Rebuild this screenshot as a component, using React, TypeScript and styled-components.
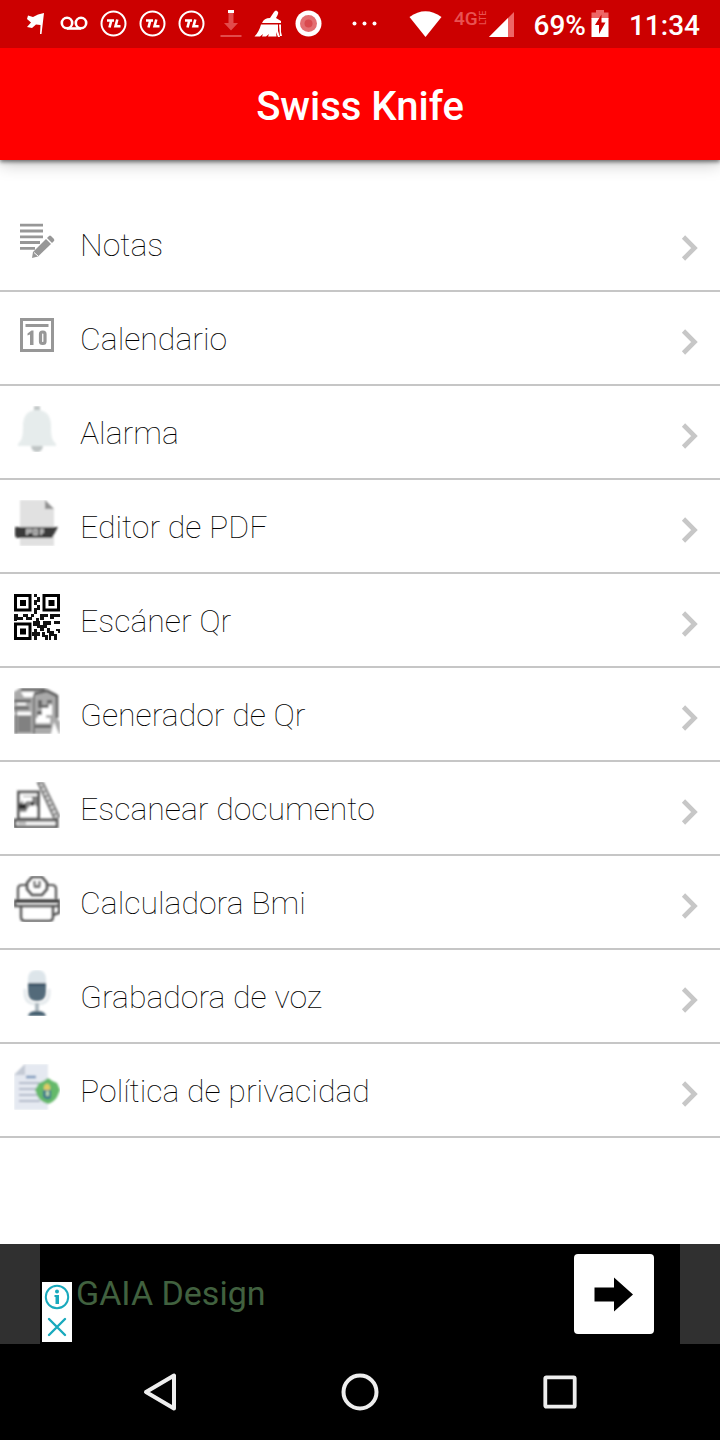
import React from "react";
import styled, { createGlobalStyle } from "styled-components";

const GlobalStyle = createGlobalStyle`
  * { box-sizing: border-box; }
  html, body { margin: 0; padding: 0; background: #ffffff; }
  body { font-family: Roboto, "Liberation Sans", sans-serif; }
  button { border: 0; padding: 0; margin: 0; background: none; cursor: pointer; }
  svg { display: block; flex: none; }
`;

const Screen = styled.div`
  min-height: 100vh;
  display: flex;
  flex-direction: column;
`;

const StatusBar = styled.div`
  position: relative;
  z-index: 1;
  height: 48px;
  background: #cc0000;
  color: #ffffff;
  display: flex;
  align-items: center;
  justify-content: space-between;
  padding: 0 20px 0 16px;
`;

const StatusGroup = styled.div<{ $gap?: number }>`
  display: flex;
  align-items: center;
  gap: ${(p) => p.$gap ?? 0}px;
`;

const StatusText = styled.span`
  font-size: 28px;
  line-height: 32px;
  font-weight: 500;
  padding-top: 4px;
`;

const AppBar = styled.header`
  height: 112px;
  background: #ff0000;
  display: flex;
  align-items: center;
  justify-content: center;
  padding-top: 6px;
  box-shadow: 0 2px 4px rgba(0, 0, 0, 0.5), 0 4px 16px rgba(0, 0, 0, 0.22);
`;

const Title = styled.h1`
  margin: 0;
  color: #ffffff;
  font-size: 40px;
  line-height: 48px;
  font-weight: 500;
`;

const Main = styled.main`
  flex: 1;
  padding: 38px 0 40px;
`;

const Menu = styled.ul`
  list-style: none;
  margin: 0;
  padding: 0;
`;

const MenuItem = styled.li`
  border-bottom: 2px solid #c6c6c6;
`;

const MenuLink = styled.a`
  display: flex;
  align-items: center;
  height: 92px;
  padding: 4px 20px 0 14px;
  color: #000000;
  text-decoration: none;
`;

const IconBox = styled.span`
  flex: none;
  width: 66px;
  height: 56px;
`;

const Label = styled.span`
  flex: 1;
  font-size: 32px;
  line-height: 40px;
  font-weight: 100;
  padding-bottom: 2px;
`;

const ChevronBox = styled.span`
  padding-top: 4px;
`;

const AdBanner = styled.aside`
  height: 100px;
  background: #303030;
  padding: 0 40px;
`;

const AdBody = styled.div`
  position: relative;
  height: 100%;
  background: #000000;
  display: flex;
  align-items: center;
  justify-content: space-between;
  padding: 0 26px 0 36px;
`;

const AdLink = styled.a`
  color: #41613f;
  font-size: 34px;
  line-height: 40px;
  text-decoration: none;
  padding-bottom: 2px;
`;

const AdButton = styled.button`
  width: 80px;
  height: 80px;
  border-radius: 4px;
  background: #ffffff;
  display: flex;
  align-items: center;
  justify-content: center;
`;

const AdChoices = styled.div`
  position: absolute;
  left: 2px;
  bottom: 2px;
  display: flex;
  flex-direction: column;
  background: #ffffff;
`;

const AdChoice = styled.button`
  width: 30px;
  height: 30px;
`;

const NavBar = styled.nav`
  height: 96px;
  background: #000000;
  display: flex;
  justify-content: center;
`;

const NavButton = styled.button`
  width: 200px;
  display: flex;
  align-items: center;
  justify-content: center;
`;

/* ---------- status bar icons ---------- */

const StatusIcon = ({ children }: { children: React.ReactNode }) => (
  <svg width="39" height="48" viewBox="0 0 39 48" aria-hidden="true">{children}</svg>
);

const FlagIcon = () => (
  <StatusIcon>
    <path d="M12 15.500 L17 17 L22 14.500 L28 13 L25.500 34 H24 L24.500 25 L20 24.500 L16 28 L11 27 L15 22.500 L11 19Z" fill="#fff" />
  </StatusIcon>
);

const VoicemailIcon = () => (
  <StatusIcon>
    <g fill="none" stroke="#fff" strokeWidth="2.600">
      <circle cx="12" cy="23" r="5.200" />
      <circle cx="26" cy="23" r="5.200" />
      <path d="M12 28.500 H26" />
    </g>
  </StatusIcon>
);

const TlIcon = () => (
  <StatusIcon>
    <circle cx="19.500" cy="23.500" r="12" fill="none" stroke="#fff" strokeWidth="2" />
    <path d="M13 20.500 H20 M17.300 20.500 L15.500 27.500 M23.300 19.500 L21.500 26.300 H26.500" fill="none" stroke="#fff" strokeWidth="2.600" />
  </StatusIcon>
);

const DownloadIcon = () => (
  <StatusIcon>
    <g fill="#e24b4b">
      <path d="M17.500 13 H22.500 V23 H27 L20 30.500 L13 23 H17.500Z" />
      <rect x="9.500" y="35" width="21" height="2" />
    </g>
    <rect x="17" y="10" width="6" height="3" fill="#fff" />
  </StatusIcon>
);

const BroomIcon = () => (
  <StatusIcon>
    <g fill="#fff" transform="translate(4 0)">
      <path d="M16 18 L20 12 Q22 9 24 12 Q25 13 22 18 L27 21 V23 H8 Q10 18 16 18Z" />
      <path d="M7 24.500 H24 L24 31 L26 37 H24 L22 32 L22.500 36.500 H14 L15 34 L12 36.500 H8 L9 34 L6 36.500 H0.500 Q5 32 7 24.500Z" />
      <path d="M25 24.500 H27 V32 L28 36 H26Z" />
    </g>
  </StatusIcon>
);

const RecordIcon = () => (
  <StatusIcon>
    <circle cx="19.500" cy="23.500" r="13" fill="#fff" />
    <circle cx="19.500" cy="23.500" r="8.500" fill="#e36f72" />
    <circle cx="19.500" cy="23.500" r="4" fill="#d94a4e" />
  </StatusIcon>
);

const MoreIcon = () => (
  <svg width="74" height="48" viewBox="0 0 74 48" aria-hidden="true">
    <g fill="#fff">
      <circle cx="26.500" cy="23.500" r="2" />
      <circle cx="36.500" cy="23.500" r="2" />
      <circle cx="46.500" cy="23.500" r="2" />
    </g>
  </svg>
);

const WifiIcon = () => (
  <svg width="33" height="48" viewBox="0 0 33 48" aria-hidden="true">
    <path d="M0.500 17 Q16.500 5.500 32.500 17 L16.500 37Z" fill="#fff" />
  </svg>
);

const SignalIcon = () => (
  <svg width="60" height="48" viewBox="0 0 60 48" aria-hidden="true">
    <text x="0" y="25" fill="#e85252" fontSize="19" fontWeight="500" fontFamily="Roboto, sans-serif">4G</text>
    <text transform="translate(32 25) rotate(-90)" fill="#e85252" fontSize="9" fontWeight="500" fontFamily="Roboto, sans-serif">LTE</text>
    <path d="M60 12 V37 H35Z" fill="#e66" />
    <path d="M54 18 V37 H35Z" fill="#fff" />
  </svg>
);

const BatteryIcon = () => (
  <svg width="18" height="48" viewBox="0 0 18 48" aria-hidden="true">
    <path d="M5 10 H13 V12.500 H17.500 V19 H0.500 V12.500 H5Z" fill="#e66" />
    <rect x="0.500" y="18" width="17" height="19" fill="#fff" />
    <path d="M10.500 14.500 L4 25 H8 V34 L14.500 22.500 H10.500Z" fill="#cc0000" />
  </svg>
);

/* ---------- menu icons ---------- */

const MenuIcon = ({ soft, children }: { soft?: boolean; children: React.ReactNode }) => (
  <svg width="46" height="46" viewBox="0 0 46 46" aria-hidden="true">
    <defs>
      <filter id="soften" x="0" y="0" width="46" height="46" filterUnits="userSpaceOnUse">
        <feGaussianBlur stdDeviation="0.9" />
      </filter>
    </defs>
    <g filter={soft ? "url(#soften)" : undefined}>{children}</g>
  </svg>
);

const NotesIcon = () => (
  <MenuIcon>
    <path d="M6 7.200 H29 M6 13 H29 M6 18.800 H29 M6 24.500 H26 M6 30.300 H21" fill="none" stroke="#979797" strokeWidth="2.800" />
    <path d="M32 21 L37 26 L24 38.500 L18 40 L19 34Z" fill="#979797" />
    <path d="M33 20 L35 18 Q36 17 37 18 L39.500 20.500 Q41 22 40 23 L38 25Z" fill="#979797" />
    <path d="M20 34.500 L24 38" stroke="#fff" strokeWidth="1" />
  </MenuIcon>
);

const CalendarIcon = () => (
  <MenuIcon>
    <rect x="7.500" y="7.500" width="31" height="31" fill="none" stroke="#979797" strokeWidth="3" />
    <rect x="11.500" y="12" width="23" height="3" fill="#979797" />
    <path d="M13.500 21.500 L17.500 18.500 H19.500 V33 H16 V22.500 L13.500 23.500Z" fill="#979797" />
    <rect x="26.500" y="20" width="4.500" height="11.500" rx="2" fill="none" stroke="#979797" strokeWidth="3.200" />
  </MenuIcon>
);

const BellIcon = () => (
  <MenuIcon soft>
    <rect x="20" y="0" width="6" height="6" fill="#c2c7c7" />
    <path d="M17 40 H29 Q28 46 23 46 Q18 46 17 40Z" fill="#bfc5c5" />
    <path d="M23 4 C12 4 9 12 9 20 C9 31 8 34 4 38 V40 H42 V38 C38 34 37 31 37 20 C37 12 34 4 23 4Z" fill="#e6ecec" />
  </MenuIcon>
);

const PdfIcon = () => (
  <MenuIcon soft>
    <path d="M6 0 H31 L40 9 V46 H6Z" fill="#e1e1e1" />
    <path d="M31 0 L40 9 H31Z" fill="#909090" />
    <path d="M1 27 H44 L38 38 H3 L1 36Z" fill="#3a3a3a" />
    <path d="M13 35 V29.500 H17 V32 H13 M20 29.500 V34.500 H23 V29.500Z M27 35 V29.500 H30 M27 32 H30" fill="none" stroke="#b8b8b8" strokeWidth="2" />
  </MenuIcon>
);

const QrFinder = ({ x, y }: { x: number; y: number }) => (
  <g transform={`translate(${x} ${y})`}>
    <rect x="1.500" y="1.500" width="14.500" height="14.500" fill="none" stroke="#000" strokeWidth="3" />
    <rect x="6" y="6" width="6" height="6" fill="#000" />
  </g>
);

const QrScanIcon = () => (
  <MenuIcon>
    <QrFinder x={0} y={0} />
    <QrFinder x={28.5} y={0} />
    <QrFinder x={0} y={28.5} />
    <path
      d="M20 0h3v3h3v5h-3v3h-3v-5h3v-3h-3zM23 11h3v5h-3v4h-3v-6h3zM0 20h4v3h5v3h-9zM9 20h5v3h3v-3h3v3h-2v3h-6v-3h-3zM26 20h8v3h-4v3h-4zM36 20h10v3h-6v2h-4zM22 24h3v3h-3zM40 27h6v3h-6zM19 27h7v4h3v-4h8v4h-4v3h-3v3h-4v-3h-3v-2h-4zM20 35h3v3h3v4h-3v4h-3v-4h-2v-4h2zM28 38h3v3h3v5h-3v-3h-3zM33 34h3v3h4v3h3v6h-3v-4h-3v4h-2v-7h-2zM42 35h4v4h-2v-2h-2zM0 26h3v1h-3z"
      fill="#111"
    />
  </MenuIcon>
);

const QrGeneratorIcon = () => (
  <MenuIcon soft>
    <path d="M0 4 L6 0 H32 L43 6 V30 L46 34 V46 H0Z" fill="#aaaaaa" />
    <path d="M7 1.500 H31 M0 13 H17 M0 20 H15 M43 7 V30 M20 6 L33 3 L43 8" fill="none" stroke="#606060" strokeWidth="2.600" />
    <path d="M7 4 H20 V9 H10Z M3 15 H12 V17 H3Z M35 17 H38 V27 H32 V30 H24 V27 H28 V20 H35Z M22 30 H36 V35 H22Z M40 34 L45 46 H37Z M0 24 H17 V27 H0Z" fill="#ffffff" />
    <path d="M24 12 H28 V17 H33 V12 H38 V15 H34 V20 H24Z M23 23 H28 V27 H23Z M21 37 H37 V40 H21Z" fill="#666" />
    <rect x="4" y="28" width="13" height="16" fill="#818181" />
    <path d="M2 22 V46 M20 6 V46" stroke="#777" strokeWidth="2" />
  </MenuIcon>
);

const DocScanIcon = () => (
  <MenuIcon soft>
    <rect x="4.500" y="10" width="20" height="27" fill="#fff" stroke="#606060" strokeWidth="3" />
    <path d="M5 22 L9 18 V14 H23 V25 L19 21 L14 26 L12 30 H5Z" fill="#858585" />
    <path d="M5 22 H12 V27 H5Z M17 20 H20 V24 H17Z" fill="#2f2f2f" />
    <path d="M9 15 H18 V19 H13 L9 22Z M7 31 H22 V35 H7Z" fill="#fff" />
    <path d="M24 1 H29 L45 34 L41 38Z" fill="#efefef" stroke="#777" strokeWidth="2" />
    <path d="M27 4 L43 36" stroke="#8c8c8c" strokeWidth="3" strokeDasharray="3 2" />
    <path d="M1 38 H43 V45 H1Z" fill="#f7f7f7" stroke="#5a5a5a" strokeWidth="2.800" />
    <path d="M4 41 H12" stroke="#b5b5b5" strokeWidth="3" />
  </MenuIcon>
);

const BmiIcon = () => (
  <MenuIcon soft>
    <g fill="none" stroke="#555">
      <path d="M4 23 V13 Q4 9 8 9 H13 M33 9 H38 Q42 9 42 13 V23" strokeWidth="2.200" />
      <path d="M18 1 H28 L33 7 V13 L28 19 H18 L13 13 V7Z" strokeWidth="2.600" />
      <path d="M0 25 H46" stroke="#222" strokeWidth="3" />
      <path d="M1 24 V30 H45 V25" strokeWidth="2.400" />
      <path d="M7 31 V41 Q7 45 11 45 H35 Q39 45 39 41 V31 M39 39 L45 37 V30" strokeWidth="2.400" />
      <path d="M20.500 5 V10 H25.500 V5" strokeWidth="1.800" />
    </g>
    <rect x="20" y="9" width="6" height="3" fill="#777" />
  </MenuIcon>
);

const MicIcon = () => (
  <MenuIcon soft>
    <path d="M11 19 V23 Q11 34 23 34 Q35 34 35 23 V19" fill="none" stroke="#e5eaed" strokeWidth="3" />
    <path d="M14 14 V9 Q14 0 23 0 Q32 0 32 9 V14Z" fill="#dde5ea" />
    <path d="M14 13 H32 V22 Q32 31 23 31 Q14 31 14 22Z" fill="#536b7a" />
    <path d="M15 13 H31 V16 H15Z" fill="#3d5567" />
    <rect x="21" y="33" width="4" height="8" fill="#aeb9c0" />
    <path d="M14 46 Q15 41 23 41 Q31 41 32 46Z" fill="#455f70" />
  </MenuIcon>
);

const PolicyIcon = () => (
  <MenuIcon soft>
    <path d="M11 0 H34 V46 H0 V11Z" fill="#e5e9f1" />
    <path d="M11 0 V11 H0Z" fill="#c4cad5" />
    <path d="M12 13 H22" stroke="#7998bb" strokeWidth="2.600" />
    <path d="M5 19 H25 M5 25 H24 M5 31 H24 M5 37 H26" stroke="#b0b7c8" strokeWidth="2.200" />
    <path d="M34 14 Q39 18 43 19 L46 26 L43 33 Q40 38 34 40 Q27 38 24 33 L21 26 L25 19 Q29 18 34 14Z" fill="#65b96b" />
    <path d="M29 26 H37 V34 Q33 37 29 33Z" fill="#3f7a8c" />
    <path d="M30 26 V22 Q33 17 36 22 V26" fill="#e0cc66" />
    <rect x="32" y="27" width="3" height="5" fill="#b9d8b2" />
  </MenuIcon>
);

const Chevron = () => (
  <svg width="20" height="28" viewBox="0 0 20 28" aria-hidden="true">
    <path d="M3.500 3 L14.500 14 L3.500 25" fill="none" stroke="#c7c7c7" strokeWidth="4.600" />
  </svg>
);

const items = [
  { label: "Notas", Icon: NotesIcon },
  { label: "Calendario", Icon: CalendarIcon },
  { label: "Alarma", Icon: BellIcon },
  { label: "Editor de PDF", Icon: PdfIcon },
  { label: "Escáner Qr", Icon: QrScanIcon },
  { label: "Generador de Qr", Icon: QrGeneratorIcon },
  { label: "Escanear documento", Icon: DocScanIcon },
  { label: "Calculadora Bmi", Icon: BmiIcon },
  { label: "Grabadora de voz", Icon: MicIcon },
  { label: "Política de privacidad", Icon: PolicyIcon },
];

export default function App() {
  return (
    <>
      <GlobalStyle />
      <Screen>
        <StatusBar>
          <StatusGroup>
            <FlagIcon />
            <VoicemailIcon />
            <TlIcon />
            <TlIcon />
            <TlIcon />
            <DownloadIcon />
            <BroomIcon />
            <RecordIcon />
            <MoreIcon />
          </StatusGroup>
          <StatusGroup $gap={20}>
            <StatusGroup $gap={12}>
              <WifiIcon />
              <SignalIcon />
            </StatusGroup>
            <StatusGroup $gap={5}>
              <StatusText>69%</StatusText>
              <BatteryIcon />
            </StatusGroup>
            <StatusText>11:34</StatusText>
          </StatusGroup>
        </StatusBar>

        <AppBar>
          <Title>Swiss Knife</Title>
        </AppBar>

        <Main>
          <Menu>
            {items.map(({ label, Icon }) => (
              <MenuItem key={label}>
                <MenuLink href="#">
                  <IconBox>
                    <Icon />
                  </IconBox>
                  <Label>{label}</Label>
                  <ChevronBox>
                    <Chevron />
                  </ChevronBox>
                </MenuLink>
              </MenuItem>
            ))}
          </Menu>
        </Main>

        <AdBanner>
          <AdBody>
            <AdLink href="#">GAIA Design</AdLink>
            <AdButton aria-label="Abrir">
              <svg width="40" height="36" viewBox="0 0 40 36" aria-hidden="true">
                <path d="M0.500 11.500 H20 V1.500 L39 18.500 L20 35.500 V25.500 H0.500Z" fill="#000" />
              </svg>
            </AdButton>
            <AdChoices>
              <AdChoice aria-label="Información">
                <svg width="30" height="30" viewBox="0 0 30 30" aria-hidden="true">
                  <circle cx="15" cy="15" r="11.200" fill="none" stroke="#18a9bd" strokeWidth="2" />
                  <circle cx="15" cy="9.500" r="2" fill="#18a9bd" />
                  <path d="M12.500 13 H17 V22 H13.500 V15 H12.500Z" fill="#18a9bd" />
                </svg>
              </AdChoice>
              <AdChoice aria-label="Cerrar">
                <svg width="30" height="30" viewBox="0 0 30 30" aria-hidden="true">
                  <path d="M7 7 L23 23 M23 7 L7 23" stroke="#18a9bd" strokeWidth="2.400" strokeLinecap="round" />
                </svg>
              </AdChoice>
            </AdChoices>
          </AdBody>
        </AdBanner>

        <NavBar>
          <NavButton aria-label="Atrás">
            <svg width="40" height="40" viewBox="0 0 40 40" aria-hidden="true">
              <path d="M34 3.500 V36.500 L6 20Z" fill="none" stroke="#eee" strokeWidth="4" strokeLinejoin="round" />
            </svg>
          </NavButton>
          <NavButton aria-label="Inicio">
            <svg width="40" height="40" viewBox="0 0 40 40" aria-hidden="true">
              <circle cx="20" cy="20" r="16.500" fill="none" stroke="#eee" strokeWidth="4" />
            </svg>
          </NavButton>
          <NavButton aria-label="Recientes">
            <svg width="40" height="40" viewBox="0 0 40 40" aria-hidden="true">
              <rect x="5.300" y="5.300" width="29.400" height="29.400" rx="1" fill="none" stroke="#eee" strokeWidth="3.800" />
            </svg>
          </NavButton>
        </NavBar>
      </Screen>
    </>
  );
}
